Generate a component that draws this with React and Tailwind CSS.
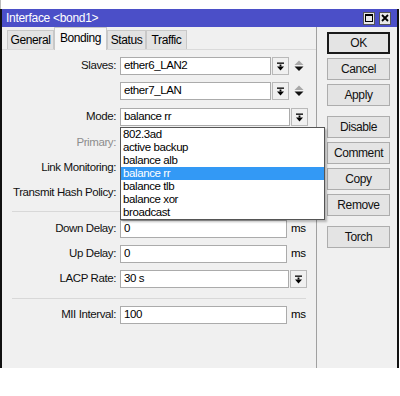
import React from "react";

function DropBtn() {
  return (
    <div className="w-[17px] h-[18px] shrink-0 border border-[#b9b9b9] bg-[#f0f0f0] flex items-center justify-center">
      <svg width="9" height="9" viewBox="0 0 9 9">
        <rect x="1" y="0.5" width="7" height="1.3" fill="#000" />
        <rect x="3.6" y="2.5" width="1.8" height="2" fill="#000" />
        <polygon points="1,4.5 8,4.5 4.5,8.5" fill="#000" />
      </svg>
    </div>
  );
}

function Spinner() {
  return (
    <svg width="10" height="12" viewBox="0 0 10 12" className="ml-[5px] shrink-0">
      <polygon points="5,0.5 9.5,5 0.5,5" fill="#a8a8a8" />
      <polygon points="0.5,6.5 9.5,6.5 5,11" fill="#111" />
    </svg>
  );
}

function Input({ w, children }) {
  return (
    <div
      className="h-[18px] shrink-0 bg-white border border-[#ababab] pl-[3px] flex items-center text-[11.5px] text-black"
      style={{ width: w }}
    >
      {children}
    </div>
  );
}

function Row({ label, gray, children, className = "" }) {
  return (
    <div className={"flex items-center h-[18px] " + className}>
      <div
        className={
          "w-[115px] shrink-0 text-right pr-[1px] text-[11.5px] " +
          (gray ? "text-[#8d8d8d]" : "text-[#111]")
        }
      >
        {label}
      </div>
      <div className="ml-[3px] flex items-center">{children}</div>
    </div>
  );
}

function Btn({ children, def, className = "" }) {
  return (
    <div
      className={
        "w-[63px] h-[22px] flex items-center justify-center text-[12px] text-[#111] bg-[#e4e4e4] " +
        (def ? "border-2 border-[#1a1a1a] " : "border border-[#adadad] ") +
        className
      }
    >
      {children}
    </div>
  );
}

const items = [
  "802.3ad",
  "active backup",
  "balance alb",
  "balance rr",
  "balance tlb",
  "balance xor",
  "broadcast",
];

export default function App() {
  return (
    <div className="w-[400px] h-[396px] bg-white font-['Liberation_Sans',Arial,sans-serif] tracking-[-0.4px] overflow-hidden">
      <div className="h-[9px] bg-white border-l border-[#bbb]" />
      <div className="w-[399px] h-[359px] bg-[#f0f0f0] border-l-2 border-r-2 border-[#111] flex flex-col">
        {/* title bar */}
        <div className="h-[18px] bg-[#4b4fc8] flex items-center pl-[4px] pr-[6px] shrink-0">
          <span className="text-white text-[12px] tracking-[-0.3px]">Interface &lt;bond1&gt;</span>
          <div className="ml-auto flex items-center gap-[4px]">
            <div className="w-[12px] h-[13px] bg-[#e8e8e8] border border-[#555] flex items-center justify-center">
              <div className="w-[8px] h-[8px] border border-black border-t-2" />
            </div>
            <div className="w-[12px] h-[13px] bg-[#e8e8e8] border border-[#555] flex items-center justify-center">
              <svg width="8" height="8" viewBox="0 0 8 8">
                <path d="M1 1 L7 7 M7 1 L1 7" stroke="#000" strokeWidth="1.8" />
              </svg>
            </div>
          </div>
        </div>

        <div className="flex flex-1">
          {/* left area */}
          <div className="w-[315px] flex flex-col border-r border-[#a0a0a0] relative">
            {/* tabs */}
            <div className="h-[23px] flex items-end pl-[5px] border-b border-[#dadada]">
              <div className="h-[19px] w-[47px] bg-[#e3e3e3] border border-[#c8c8c8] border-b-0 flex items-center justify-center text-[12px]">
                General
              </div>
              <div className="h-[23px] w-[53px] bg-[#f6f6f6] border border-[#c8c8c8] border-b-0 flex items-center justify-center text-[12px] -mb-px pb-[3px]">
                Bonding
              </div>
              <div className="h-[19px] w-[39px] bg-[#e3e3e3] border border-[#c8c8c8] border-b-0 flex items-center justify-center text-[12px]">
                Status
              </div>
              <div className="h-[19px] w-[41px] bg-[#e3e3e3] border border-[#c8c8c8] border-b-0 flex items-center justify-center text-[12px]">
                Traffic
              </div>
            </div>

            {/* panel */}
            <div className="flex-1 pt-[7px] flex flex-col">
              <Row label="Slaves:">
                <Input w={151}>ether6_LAN2</Input>
                <div className="ml-[1px]"><DropBtn /></div>
                <Spinner />
              </Row>
              <Row label="" className="mt-[7px]">
                <Input w={151}>ether7_LAN</Input>
                <div className="ml-[1px]"><DropBtn /></div>
                <Spinner />
              </Row>
              <Row label="Mode:" className="mt-[8px]">
                <Input w={170}>balance rr</Input>
                <div className="ml-[1px]"><DropBtn /></div>
              </Row>
              <Row label="Primary:" gray className="mt-[8px]">
                <Input w={170}></Input>
              </Row>
              <Row label="Link Monitoring:" className="mt-[7px]">
                <Input w={170}></Input>
              </Row>
              <Row label="Transmit Hash Policy:" className="mt-[7px]">
                <Input w={170}></Input>
              </Row>
              <div className="mt-[9px] mx-[10px] h-px bg-[#d8d8d8]" />
              <Row label="Down Delay:" className="mt-[8px]">
                <Input w={167}>0</Input>
                <span className="ml-[4px] text-[11.5px]">ms</span>
              </Row>
              <Row label="Up Delay:" className="mt-[7px]">
                <Input w={167}>0</Input>
                <span className="ml-[4px] text-[11.5px]">ms</span>
              </Row>
              <Row label="LACP Rate:" className="mt-[7px]">
                <Input w={169}>30 s</Input>
                <div className="ml-[1px]"><DropBtn /></div>
              </Row>
              <div className="mt-[10px] mx-[10px] h-px bg-[#d8d8d8]" />
              <Row label="MII Interval:" className="mt-[7px]">
                <Input w={167}>100</Input>
                <span className="ml-[4px] text-[11.5px]">ms</span>
              </Row>
            </div>

            {/* open dropdown list */}
            <div className="absolute left-[118px] top-[100px] w-[205px] h-[93px] bg-white border border-[#555] shadow-[2px_2px_2px_rgba(0,0,0,0.25)]">
              {items.map((it) => (
                <div
                  key={it}
                  className={
                    "h-[13px] leading-[13px] text-[11.5px] pl-[2px] " +
                    (it === "balance rr" ? "bg-[#3399f5] text-white" : "text-black")
                  }
                >
                  {it}
                </div>
              ))}
            </div>
          </div>

          {/* right buttons */}
          <div className="flex-1 pl-[10px] pt-[5px] flex flex-col">
            <Btn def>OK</Btn>
            <Btn className="mt-[4px]">Cancel</Btn>
            <Btn className="mt-[4px]">Apply</Btn>
            <Btn className="mt-[10px]">Disable</Btn>
            <Btn className="mt-[4px]">Comment</Btn>
            <Btn className="mt-[4px]">Copy</Btn>
            <Btn className="mt-[4px]">Remove</Btn>
            <Btn className="mt-[10px]">Torch</Btn>
          </div>
        </div>
      </div>
    </div>
  );
}
